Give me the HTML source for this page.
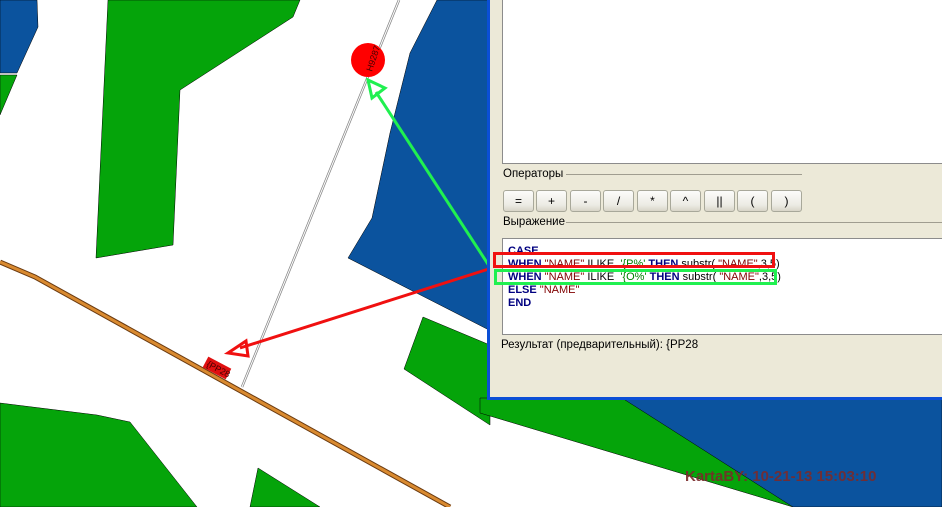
<!DOCTYPE html>
<html><head><meta charset="utf-8"><style>
body{margin:0;width:942px;height:507px;overflow:hidden;position:relative;background:#fff;font-family:"Liberation Sans",sans-serif}
svg{position:absolute;left:0;top:0}
.dlg{position:absolute;left:487px;top:-5px;width:460px;height:405px;background:#ece9d8;border:3px solid #0b4fd6;border-top:none;border-right:none;box-sizing:border-box}
.t{position:absolute;font-size:11.5px;color:#000;white-space:nowrap}
.box{position:absolute;background:#fff;border:1px solid #8c8c8c;box-sizing:border-box}
.btn{position:absolute;top:190px;width:31px;height:22px;border:1px solid #a8a89a;border-radius:3px;background:linear-gradient(#fcfcfa,#ecebe4 70%,#d8d5c8);box-sizing:border-box;font-size:12px;text-align:center;line-height:20px}
.code{position:absolute;left:508px;font-size:11px;line-height:13px;white-space:pre}
b{color:#000080}.s{color:#800000}.g{color:#008000}
</style></head><body>
<svg width="942" height="507">
<polygon points="0,0 37,0 38,27 17,73 0,73" fill="#0b539e" stroke="#000" stroke-width="0.5"/>
<polygon points="0,75 17,75 0,115" fill="#05a40a" stroke="#000" stroke-width="0.5"/>
<polygon points="108,0 300,0 293,17 180,90 173,245 96,258" fill="#05a40a" stroke="#000" stroke-width="0.5"/>
<polygon points="437,0 490,0 490,330 487,329 348,258 372,218 390,133 410,53" fill="#0b539e" stroke="#000" stroke-width="0.5"/>
<polygon points="423,317 490,345 490,425 404,369" fill="#05a40a" stroke="#000" stroke-width="0.5"/>
<polygon points="0,403 97,415 130,422 197,507 0,507" fill="#05a40a" stroke="#000" stroke-width="0.5"/>
<polygon points="258,468 320,507 250,507" fill="#05a40a" stroke="#000" stroke-width="0.5"/>
<polygon points="480,398 942,398 942,507 793,507 480,413" fill="#05a40a" stroke="#000" stroke-width="0.5"/>
<polygon points="622,398 942,398 942,507 793,507" fill="#0b539e" stroke="#000" stroke-width="0.5"/>
<line x1="399" y1="0" x2="242" y2="387" stroke="#888" stroke-width="2.5"/>
<line x1="399" y1="0" x2="242" y2="387" stroke="#fff" stroke-width="1"/>
<polyline points="0,262 35,277 450,507" fill="none" stroke="#6a3a10" stroke-width="5"/>
<polyline points="0,262 35,277 450,507" fill="none" stroke="#d98a30" stroke-width="3"/>
<circle cx="368" cy="60" r="17" fill="#f00"/>
<text x="0" y="0" font-size="9" fill="#400" transform="translate(372,72) rotate(-72)" font-family="Liberation Sans">H9287</text>
<rect x="204" y="362" width="26" height="12" fill="#e01010" transform="rotate(28 217 368)"/>
<text x="0" y="0" font-size="9" fill="#400" transform="translate(206,366) rotate(28)" font-family="Liberation Sans">{PP28</text>
<line x1="495" y1="267" x2="240" y2="348" stroke="#f01010" stroke-width="3"/>
<polygon points="228,353 246,341 248,356" fill="none" stroke="#f01010" stroke-width="3"/>
<line x1="497" y1="278" x2="376" y2="92" stroke="#20f050" stroke-width="3"/>
<polygon points="368,80 385,88 372,98" fill="none" stroke="#20f050" stroke-width="3"/>
<text x="685" y="481" font-size="15" font-weight="bold" fill="#7a2a2a" fill-opacity="0.9" font-family="Liberation Sans">KartaBY: 10-21-13 15:03:10</text>
</svg>
<div class="dlg"></div>
<div class="box" style="left:502px;top:-2px;width:445px;height:166px"></div>
<div class="t" style="left:503px;top:168px">Операторы</div>
<div style="position:absolute;left:566px;top:174px;width:236px;border-top:1px solid #a09d90"></div>
<div class="btn" style="left:503px">=</div><div class="btn" style="left:536px">+</div><div class="btn" style="left:570px">-</div><div class="btn" style="left:603px">/</div><div class="btn" style="left:637px">*</div><div class="btn" style="left:670px">^</div><div class="btn" style="left:704px">||</div><div class="btn" style="left:737px">(</div><div class="btn" style="left:771px">)</div>
<div class="t" style="left:503px;top:216px">Выражение</div>
<div style="position:absolute;left:566px;top:222px;width:380px;border-top:1px solid #a09d90"></div>
<div class="box" style="left:502px;top:238px;width:445px;height:97px"></div>
<div class="code" style="top:245px"><b>CASE</b>
<b>WHEN</b> <span class="s">"NAME"</span> ILIKE  <span class="g">'{P%'</span> <b>THEN</b> substr( <span class="s">"NAME"</span>,3,5)
<b>WHEN</b> <span class="s">"NAME"</span> ILIKE  <span class="g">'{O%'</span> <b>THEN</b> substr( <span class="s">"NAME"</span>,3,5)
<b>ELSE</b> <span class="s">"NAME"</span>
<b>END</b></div>
<div style="position:absolute;left:493px;top:252px;width:282px;height:16px;border:3px solid #f01010;box-sizing:border-box"></div>
<div style="position:absolute;left:494px;top:269px;width:283px;height:16px;border:3px solid #20f050;box-sizing:border-box"></div>
<div class="t" style="left:501px;top:339px">Результат (предварительный): {PP28</div>
</body></html>
